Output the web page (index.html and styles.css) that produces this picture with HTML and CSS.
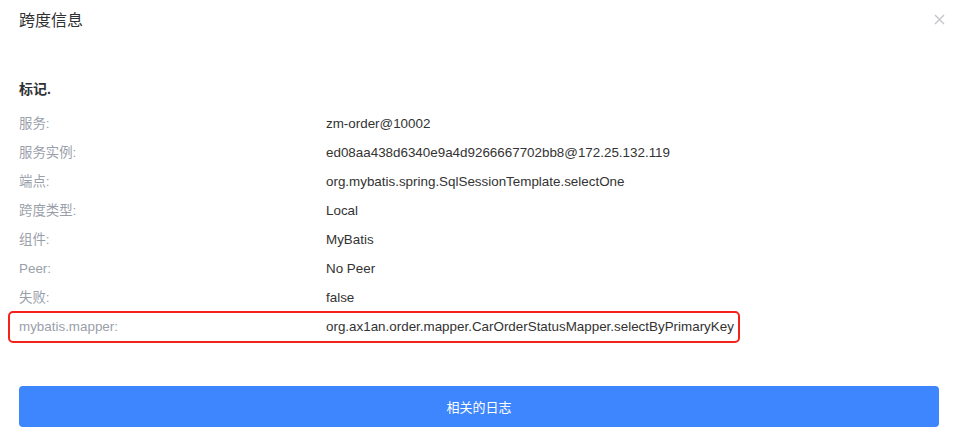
FILE: index.html
```html
<!DOCTYPE html>
<html lang="zh">
<head>
  <meta charset="UTF-8">
  <title>跨度信息</title>
  <link rel="stylesheet" href="styles.css">
</head>
<body>
  <div class="dialog">
    <div class="dialog-header">
      <span class="dialog-title">跨度信息</span>
      <button class="dialog-close" type="button" aria-label="close">
        <svg width="11" height="11" viewBox="0 0 11 11">
          <path d="M1 1L10 10M10 1L1 10" stroke="#c6c8cc" stroke-width="1.5" fill="none"/>
        </svg>
      </button>
    </div>

    <div class="dialog-body">
      <h4 class="section-title">标记.</h4>
      <ul class="tags">
        <li class="tag-row"><span class="tag-key">服务:</span><span class="tag-val">zm-order@10002</span></li>
        <li class="tag-row"><span class="tag-key">服务实例:</span><span class="tag-val">ed08aa438d6340e9a4d9266667702bb8@172.25.132.119</span></li>
        <li class="tag-row"><span class="tag-key">端点:</span><span class="tag-val">org.mybatis.spring.SqlSessionTemplate.selectOne</span></li>
        <li class="tag-row"><span class="tag-key">跨度类型:</span><span class="tag-val">Local</span></li>
        <li class="tag-row"><span class="tag-key">组件:</span><span class="tag-val">MyBatis</span></li>
        <li class="tag-row"><span class="tag-key">Peer:</span><span class="tag-val">No Peer</span></li>
        <li class="tag-row"><span class="tag-key">失败:</span><span class="tag-val">false</span></li>
        <li class="tag-row tag-row--marked"><span class="tag-key">mybatis.mapper:</span><span class="tag-val">org.ax1an.order.mapper.CarOrderStatusMapper.selectByPrimaryKey</span></li>
      </ul>

      <button class="btn-logs" type="button">相关的日志</button>
    </div>
  </div>
</body>
</html>
```

FILE: styles.css
```css
/* Общие */
body {
    margin: 0;
    background: #fff;
    font-family: "Liberation Sans", "Noto Sans CJK SC", sans-serif;
    color: #333;
}

.dialog {
    width: 954px;
    height: 441px;
}

/* Шапка */
.dialog-header {
    height: 38px;
    padding: 0 9px 0 19px;
    display: flex;
    align-items: center;
    justify-content: space-between;
}

.dialog-title {
    font-size: 16px;
    color: #303133;
}

.dialog-close {
    border: none;
    background: none;
    padding: 0;
    width: 11px;
    height: 11px;
    display: flex;
    margin-top: 1px;
}

/* Тело */
.dialog-body {
    padding: 41px 15px 0 19px;
}

.section-title {
    margin: 0 0 10px;
    font-size: 14px;
    line-height: 20px;
    font-weight: 700;
    color: #303133;
}

.tags {
    list-style: none;
    margin: 0;
    padding: 0;
}

.tag-row {
    display: flex;
    font-size: 13.4px;
    line-height: 29px;
}

.tag-key {
    width: 307px;
    flex-shrink: 0;
    color: #9aa0aa;
}

.tag-val {
    color: #333;
}

.tag-row--marked {
    width: 732px;
    box-sizing: border-box;
    margin: -1px 0 0 -11px;
    padding-left: 9px;
    line-height: 28px;
    border: 2px solid #f5221b;
    border-radius: 5px;
}

/* Кнопка */
.btn-logs {
    display: block;
    width: 920px;
    height: 41px;
    margin-top: 43px;
    border: none;
    border-radius: 4px;
    background: #3e86fe;
    color: #fff;
    font-family: inherit;
    font-size: 13px;
}
```
